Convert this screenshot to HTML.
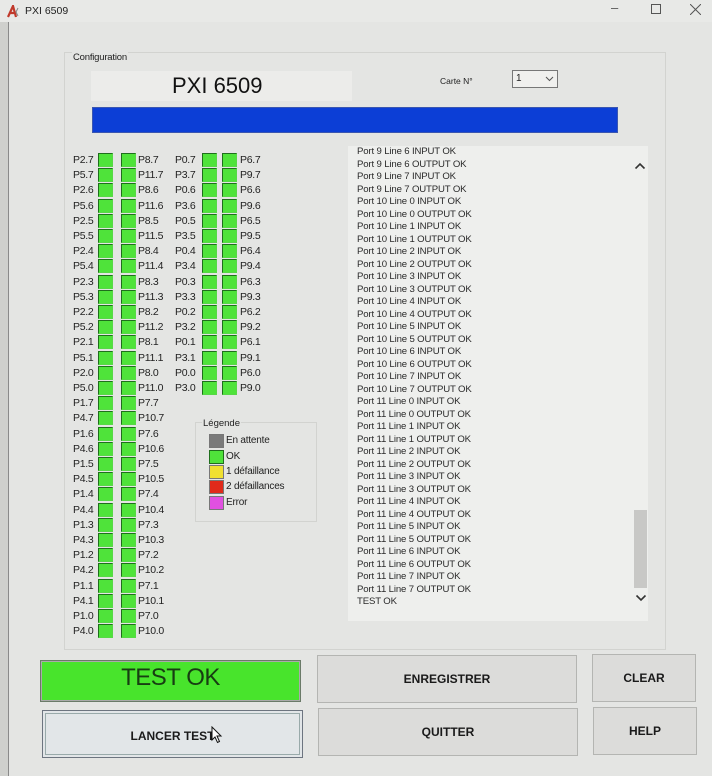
<!DOCTYPE html>
<html><head><meta charset="utf-8">
<style>
*{margin:0;padding:0;box-sizing:border-box}
body{width:712px;height:776px;overflow:hidden;background:#e4e5e3;font-family:"Liberation Sans",sans-serif;color:#222;position:relative}
.abs{position:absolute}
#strip{left:0;top:22px;width:9px;height:754px;background:#cfd0cd;border-right:1px solid #8a8a8a}
#title{left:0;top:0;width:712px;height:22px;background:#e8e9e7}
.grp{border:1px solid #d2d3d0}
.row{position:absolute;left:0;width:300px;height:15.2px;font-size:10.5px;line-height:13px;letter-spacing:-0.3px}
.row span{position:absolute;top:1px}
.b{position:absolute;top:0;width:15px;height:14px;background:#4fe33a;border:1px solid #1f6e1c;border-right-color:#57d846;border-bottom-color:#57d846}
.l1{left:73px}.x1{left:98px}.x2{left:121px}.l2{left:138px}.l3{left:175px}.x3{left:202px}.x4{left:222px}.l4{left:240px}
#list{left:348px;top:146px;width:300px;height:475px;background:#eeefed}
#list div{font-size:9.6px;line-height:12.5px;height:12.5px;padding-left:9px;color:#2a2a2a;white-space:nowrap;letter-spacing:-0.15px}
.btn{position:absolute;background:#dcdcda;border:1px solid #b4b5b2;font-size:12px;font-weight:bold;display:flex;align-items:center;justify-content:center;color:#1a1a1a}
.lg{position:absolute;left:209px;width:15px;height:14px;border:1px solid #777}
.lt{position:absolute;left:226px;font-size:10px;letter-spacing:-0.2px}
</style></head><body>
<div id="title" class="abs">
 <svg class="abs" style="left:7px;top:5px" width="14" height="13" viewBox="0 0 14 13"><path d="M1 12 L6 1 L9 12 M3 8 H8" stroke="#c0392b" stroke-width="2.2" fill="none"/><path d="M11 3 L9 7 L11 11" stroke="#888" stroke-width="1" fill="none"/></svg>
 <span class="abs" style="left:25px;top:5px;font-size:10.5px">PXI 6509</span>
 <span class="abs" style="left:611px;top:0px;font-size:13px;color:#555">–</span>
 <span class="abs" style="left:651px;top:4px;width:10px;height:10px;border:1px solid #555"></span>
 <svg class="abs" style="left:690px;top:4px" width="11" height="11"><path d="M0 0L11 11M11 0L0 11" stroke="#555" stroke-width="1"/></svg>
</div>
<div id="strip" class="abs"></div>

<div class="abs grp" style="left:64px;top:52px;width:602px;height:598px;"></div>
<span class="abs" style="left:72px;top:52px;font-size:9.5px;background:#e4e5e3;padding:0 1px;letter-spacing:-0.2px">Configuration</span>
<div class="abs" style="left:91px;top:71px;width:261px;height:30px;background:#ececea"></div>
<span class="abs" style="left:172px;top:73px;font-size:22px;color:#111">PXI 6509</span>
<span class="abs" style="left:440px;top:76px;font-size:8.5px">Carte N°</span>
<div class="abs" style="left:512px;top:70px;width:46px;height:18px;background:#f0f0ee;border:1px solid #777;font-size:10px;padding:2px 3px">1</div>
<svg class="abs" style="left:545px;top:76px" width="9" height="6"><path d="M1 1L4.5 4.5L8 1" stroke="#555" fill="none"/></svg>
<div class="abs" style="left:92px;top:107px;width:526px;height:26px;background:#0c3ed6;border:1px solid #3a56b0"></div>

<div class="abs" style="left:0;top:153px;width:300px;height:490px">
<div class="row" style="top:0px"><span class="l1">P2.7</span><i class="b x1"></i><i class="b x2"></i><span class="l2">P8.7</span><span class="l3">P0.7</span><i class="b x3"></i><i class="b x4"></i><span class="l4">P6.7</span></div>
<div class="row" style="top:15.2px"><span class="l1">P5.7</span><i class="b x1"></i><i class="b x2"></i><span class="l2">P11.7</span><span class="l3">P3.7</span><i class="b x3"></i><i class="b x4"></i><span class="l4">P9.7</span></div>
<div class="row" style="top:30.4px"><span class="l1">P2.6</span><i class="b x1"></i><i class="b x2"></i><span class="l2">P8.6</span><span class="l3">P0.6</span><i class="b x3"></i><i class="b x4"></i><span class="l4">P6.6</span></div>
<div class="row" style="top:45.6px"><span class="l1">P5.6</span><i class="b x1"></i><i class="b x2"></i><span class="l2">P11.6</span><span class="l3">P3.6</span><i class="b x3"></i><i class="b x4"></i><span class="l4">P9.6</span></div>
<div class="row" style="top:60.8px"><span class="l1">P2.5</span><i class="b x1"></i><i class="b x2"></i><span class="l2">P8.5</span><span class="l3">P0.5</span><i class="b x3"></i><i class="b x4"></i><span class="l4">P6.5</span></div>
<div class="row" style="top:76px"><span class="l1">P5.5</span><i class="b x1"></i><i class="b x2"></i><span class="l2">P11.5</span><span class="l3">P3.5</span><i class="b x3"></i><i class="b x4"></i><span class="l4">P9.5</span></div>
<div class="row" style="top:91.2px"><span class="l1">P2.4</span><i class="b x1"></i><i class="b x2"></i><span class="l2">P8.4</span><span class="l3">P0.4</span><i class="b x3"></i><i class="b x4"></i><span class="l4">P6.4</span></div>
<div class="row" style="top:106.4px"><span class="l1">P5.4</span><i class="b x1"></i><i class="b x2"></i><span class="l2">P11.4</span><span class="l3">P3.4</span><i class="b x3"></i><i class="b x4"></i><span class="l4">P9.4</span></div>
<div class="row" style="top:121.6px"><span class="l1">P2.3</span><i class="b x1"></i><i class="b x2"></i><span class="l2">P8.3</span><span class="l3">P0.3</span><i class="b x3"></i><i class="b x4"></i><span class="l4">P6.3</span></div>
<div class="row" style="top:136.8px"><span class="l1">P5.3</span><i class="b x1"></i><i class="b x2"></i><span class="l2">P11.3</span><span class="l3">P3.3</span><i class="b x3"></i><i class="b x4"></i><span class="l4">P9.3</span></div>
<div class="row" style="top:152px"><span class="l1">P2.2</span><i class="b x1"></i><i class="b x2"></i><span class="l2">P8.2</span><span class="l3">P0.2</span><i class="b x3"></i><i class="b x4"></i><span class="l4">P6.2</span></div>
<div class="row" style="top:167.2px"><span class="l1">P5.2</span><i class="b x1"></i><i class="b x2"></i><span class="l2">P11.2</span><span class="l3">P3.2</span><i class="b x3"></i><i class="b x4"></i><span class="l4">P9.2</span></div>
<div class="row" style="top:182.4px"><span class="l1">P2.1</span><i class="b x1"></i><i class="b x2"></i><span class="l2">P8.1</span><span class="l3">P0.1</span><i class="b x3"></i><i class="b x4"></i><span class="l4">P6.1</span></div>
<div class="row" style="top:197.6px"><span class="l1">P5.1</span><i class="b x1"></i><i class="b x2"></i><span class="l2">P11.1</span><span class="l3">P3.1</span><i class="b x3"></i><i class="b x4"></i><span class="l4">P9.1</span></div>
<div class="row" style="top:212.8px"><span class="l1">P2.0</span><i class="b x1"></i><i class="b x2"></i><span class="l2">P8.0</span><span class="l3">P0.0</span><i class="b x3"></i><i class="b x4"></i><span class="l4">P6.0</span></div>
<div class="row" style="top:228px"><span class="l1">P5.0</span><i class="b x1"></i><i class="b x2"></i><span class="l2">P11.0</span><span class="l3">P3.0</span><i class="b x3"></i><i class="b x4"></i><span class="l4">P9.0</span></div>
<div class="row" style="top:243.2px"><span class="l1">P1.7</span><i class="b x1"></i><i class="b x2"></i><span class="l2">P7.7</span></div>
<div class="row" style="top:258.4px"><span class="l1">P4.7</span><i class="b x1"></i><i class="b x2"></i><span class="l2">P10.7</span></div>
<div class="row" style="top:273.6px"><span class="l1">P1.6</span><i class="b x1"></i><i class="b x2"></i><span class="l2">P7.6</span></div>
<div class="row" style="top:288.8px"><span class="l1">P4.6</span><i class="b x1"></i><i class="b x2"></i><span class="l2">P10.6</span></div>
<div class="row" style="top:304px"><span class="l1">P1.5</span><i class="b x1"></i><i class="b x2"></i><span class="l2">P7.5</span></div>
<div class="row" style="top:319.2px"><span class="l1">P4.5</span><i class="b x1"></i><i class="b x2"></i><span class="l2">P10.5</span></div>
<div class="row" style="top:334.4px"><span class="l1">P1.4</span><i class="b x1"></i><i class="b x2"></i><span class="l2">P7.4</span></div>
<div class="row" style="top:349.6px"><span class="l1">P4.4</span><i class="b x1"></i><i class="b x2"></i><span class="l2">P10.4</span></div>
<div class="row" style="top:364.8px"><span class="l1">P1.3</span><i class="b x1"></i><i class="b x2"></i><span class="l2">P7.3</span></div>
<div class="row" style="top:380px"><span class="l1">P4.3</span><i class="b x1"></i><i class="b x2"></i><span class="l2">P10.3</span></div>
<div class="row" style="top:395.2px"><span class="l1">P1.2</span><i class="b x1"></i><i class="b x2"></i><span class="l2">P7.2</span></div>
<div class="row" style="top:410.4px"><span class="l1">P4.2</span><i class="b x1"></i><i class="b x2"></i><span class="l2">P10.2</span></div>
<div class="row" style="top:425.6px"><span class="l1">P1.1</span><i class="b x1"></i><i class="b x2"></i><span class="l2">P7.1</span></div>
<div class="row" style="top:440.8px"><span class="l1">P4.1</span><i class="b x1"></i><i class="b x2"></i><span class="l2">P10.1</span></div>
<div class="row" style="top:456px"><span class="l1">P1.0</span><i class="b x1"></i><i class="b x2"></i><span class="l2">P7.0</span></div>
<div class="row" style="top:471.2px"><span class="l1">P4.0</span><i class="b x1"></i><i class="b x2"></i><span class="l2">P10.0</span></div>
</div>

<div class="abs grp" style="left:195px;top:422px;width:122px;height:100px"></div>
<span class="abs" style="left:202px;top:418px;font-size:9.5px;background:#e4e5e3;padding:0 1px">Légende</span>
<i class="lg" style="top:434px;background:#7a7a7a"></i><span class="lt" style="top:435px">En attente</span>
<i class="lg" style="top:450px;background:#4fe33a;border-color:#1f6e1c"></i><span class="lt" style="top:451px">OK</span>
<i class="lg" style="top:465px;background:#f0e030"></i><span class="lt" style="top:466px">1 défaillance</span>
<i class="lg" style="top:480px;background:#e02a1a"></i><span class="lt" style="top:481px">2 défaillances</span>
<i class="lg" style="top:496px;background:#e050e0"></i><span class="lt" style="top:497px">Error</span>

<div id="list" class="abs">
<div>Port 9 Line 6 INPUT OK</div><div>Port 9 Line 6 OUTPUT OK</div><div>Port 9 Line 7 INPUT OK</div><div>Port 9 Line 7 OUTPUT OK</div>
<div>Port 10 Line 0 INPUT OK</div><div>Port 10 Line 0 OUTPUT OK</div><div>Port 10 Line 1 INPUT OK</div><div>Port 10 Line 1 OUTPUT OK</div>
<div>Port 10 Line 2 INPUT OK</div><div>Port 10 Line 2 OUTPUT OK</div><div>Port 10 Line 3 INPUT OK</div><div>Port 10 Line 3 OUTPUT OK</div>
<div>Port 10 Line 4 INPUT OK</div><div>Port 10 Line 4 OUTPUT OK</div><div>Port 10 Line 5 INPUT OK</div><div>Port 10 Line 5 OUTPUT OK</div>
<div>Port 10 Line 6 INPUT OK</div><div>Port 10 Line 6 OUTPUT OK</div><div>Port 10 Line 7 INPUT OK</div><div>Port 10 Line 7 OUTPUT OK</div>
<div>Port 11 Line 0 INPUT OK</div><div>Port 11 Line 0 OUTPUT OK</div><div>Port 11 Line 1 INPUT OK</div><div>Port 11 Line 1 OUTPUT OK</div>
<div>Port 11 Line 2 INPUT OK</div><div>Port 11 Line 2 OUTPUT OK</div><div>Port 11 Line 3 INPUT OK</div><div>Port 11 Line 3 OUTPUT OK</div>
<div>Port 11 Line 4 INPUT OK</div><div>Port 11 Line 4 OUTPUT OK</div><div>Port 11 Line 5 INPUT OK</div><div>Port 11 Line 5 OUTPUT OK</div>
<div>Port 11 Line 6 INPUT OK</div><div>Port 11 Line 6 OUTPUT OK</div><div>Port 11 Line 7 INPUT OK</div><div>Port 11 Line 7 OUTPUT OK</div>
<div>TEST OK</div>
</div>
<svg class="abs" style="left:634px;top:162px" width="12" height="8"><path d="M1.5 6.5L6 2L10.5 6.5" stroke="#333" stroke-width="1.6" fill="none"/></svg>
<div class="abs" style="left:634px;top:510px;width:13px;height:78px;background:#c8c8c6"></div>
<svg class="abs" style="left:635px;top:594px" width="12" height="8"><path d="M1.5 1.5L6 6L10.5 1.5" stroke="#333" stroke-width="1.6" fill="none"/></svg>

<div class="abs" style="left:40px;top:660px;width:261px;height:42px;background:#48e42c;border:1px solid #6a7a68;box-shadow:inset 0 0 0 1px #aaa"></div>
<span class="abs" style="left:40px;top:664px;width:261px;text-align:center;font-size:24px;color:#173d12;letter-spacing:-0.5px">TEST OK</span>
<div class="btn" style="left:42px;top:710px;width:261px;height:48px;background:#e2e6e8;border:1px solid #6d7580;box-shadow:inset 0 0 0 2px #e2e6e8,inset 0 0 0 3px #9aa"><span style="padding-top:3px">LANCER TEST</span></div>
<svg class="abs" style="left:211px;top:726px" width="12" height="18"><path d="M1 1L1 14L4 11L6.5 16.5L8.5 15.5L6 10L10 10Z" fill="#fff" stroke="#111" stroke-width="1"/></svg>
<div class="btn" style="left:317px;top:655px;width:260px;height:48px">ENREGISTRER</div>
<div class="btn" style="left:318px;top:708px;width:260px;height:48px">QUITTER</div>
<div class="btn" style="left:592px;top:654px;width:104px;height:48px">CLEAR</div>
<div class="btn" style="left:593px;top:707px;width:104px;height:48px">HELP</div>
</body></html>
